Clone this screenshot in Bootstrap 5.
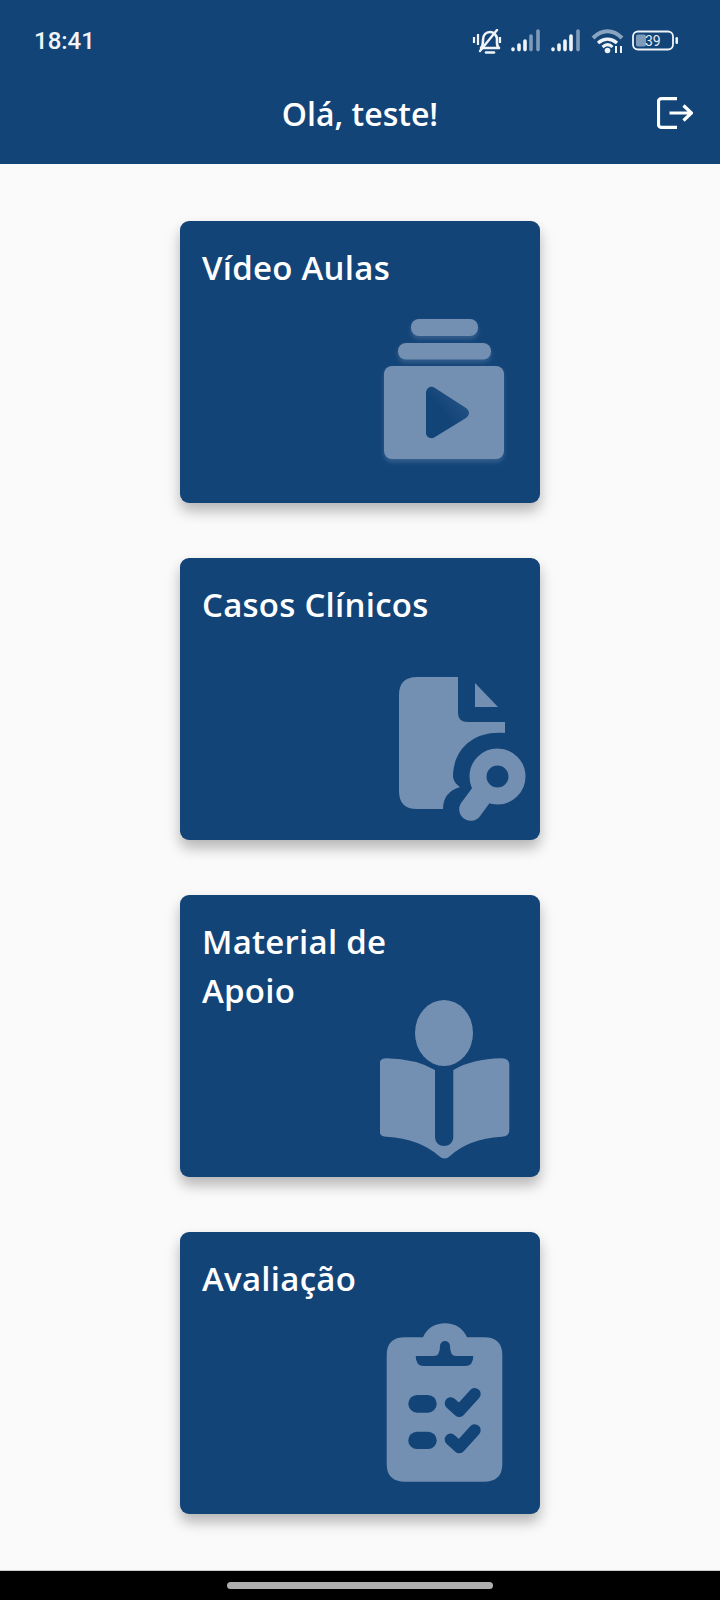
<!DOCTYPE html>
<html lang="pt">
  <head>
    <meta charset="UTF-8" />
    <meta name="viewport" content="width=device-width, initial-scale=1.0"/>
    <title>Olá, teste!</title>
    <link href="https://cdn.jsdelivr.net/npm/bootstrap@5.3.3/dist/css/bootstrap.min.css" rel="stylesheet"/>
    <style>
      body {
        background-color: #fafafa;
        height: 1600px;
        font-family: "Open Sans", Lato, sans-serif;
      }
      .app-top {
        height: 164px;
        background: #134478;
        color: #fff;
      }
      .status-row {
        height: 82px;
        padding: 29px 42px 0 34px;
      }
      .status-time {
        font: 500 24px/24px Roboto, sans-serif;
        color: #f2f5f8;
      }
      .title-row {
        padding: 15px 27px 0;
        height: 82px;
      }
      .title-side { width: 36px; height: 32px; }
      .page-title {
        font-size: 32px;
        font-weight: 600;
        line-height: 34px;
        margin: 0;
      }
      .menu-area {
        padding-top: 57px;
        gap: 55px;
      }
      .menu-tile {
        width: 360px;
        height: 282px;
        padding: 22px;
        background: #134478;
        color: #fff;
        border-radius: 9px;
        box-shadow: 0 8px 14px rgba(0, 0, 0, .28);
      }
      .menu-tile h2 {
        font-size: 33px;
        font-weight: 600;
        letter-spacing: .25px;
        line-height: 49px;
        margin: 0;
        max-width: 250px;
      }
      .tile-icon {
        position: absolute;
        right: 0;
        bottom: 0;
        width: 160px;
        height: 200px;
      }
      .icon-fill { fill: #7390b2; }
      .icon-cut { fill: #134478; }
      .icon-cut-line { fill: none; stroke: #134478; stroke-linecap: round; stroke-linejoin: round; }
      .nav-strip {
        height: 30px;
        background: #000;
        border-top: 1px solid #c8c8c8;
      }
      .nav-handle {
        width: 266px;
        height: 7px;
        margin-top: 11px;
        background: #aeaeae;
        border-radius: 4px;
      }
      .battery-text { font: 400 14px Roboto, sans-serif; fill: #e8edf3; }
    </style>
  </head>
  <body class="d-flex flex-column">
    <header class="app-top">
      <div class="status-row d-flex justify-content-between align-items-start">
        <span class="status-time">18:41</span>
        <svg width="206" height="26" viewBox="472 29 206 26" fill="none">
          <!-- bell with slash -->
          <path d="M481 48c2-2 2-4 2-8 0-5 3-8 7-8s6 3 7 6v5c0 2 .5 4 2 5z" stroke="#f0f3f7" stroke-width="2.600" stroke-linejoin="round"/>
          <path d="M486 52.500h8" stroke="#f0f3f7" stroke-width="2.600" stroke-linecap="round"/>
          <path d="M480 51 497 30" stroke="#f0f3f7" stroke-width="2.400" stroke-linecap="round"/>
          <path d="M474 37v6M478 34v11M500 37v6" stroke="#f0f3f7" stroke-width="2.200"/>
          <!-- signal 1 -->
          <g stroke-width="3.600" stroke-linecap="round">
            <path d="M513 49v.6M519 45v4.600M525 41v8.600" stroke="#f0f3f7"/>
            <path d="M531 36v13.600M538 31v18.600" stroke="#7f9bb9"/>
            <!-- signal 2 -->
            <path d="M553 49v.6M559 45v4.600M565 41v8.600M571 36v13.600" stroke="#f0f3f7"/>
            <path d="M578 31v18.600" stroke="#7f9bb9"/>
          </g>
          <!-- wifi -->
          <path d="M593 38c9-9 20-9 29 0" stroke="#8aa3bf" stroke-width="4"/>
          <path d="M598 43c6-5 13-5 19 0" stroke="#f0f3f7" stroke-width="3.400"/>
          <path d="M602.500 47c3.500-3 7-3 10 0" stroke="#f0f3f7" stroke-width="3"/>
          <circle cx="607.500" cy="50.500" r="2.800" fill="#f0f3f7"/>
          <path d="M616 46v7M621 46v7" stroke="#f0f3f7" stroke-width="2"/>
          <!-- battery -->
          <rect x="633" y="31.500" width="40" height="18" rx="5" stroke="#f0f3f7" stroke-width="1.800"/>
          <rect x="636" y="34.500" width="10" height="12" rx="2" fill="#7f9bb9"/>
          <text x="645" y="46" class="battery-text">39</text>
          <rect x="675.500" y="37" width="2.500" height="7" rx="1.200" fill="#f0f3f7"/>
        </svg>
      </div>
      <div class="title-row d-flex justify-content-between align-items-start">
        <span class="title-side"></span>
        <h1 class="page-title">Olá, teste!</h1>
        <svg class="title-side" viewBox="0 0 36 32" fill="none" stroke="#fff" stroke-width="3.200">
          <path d="M20 1.600H4.500a3 3 0 0 0-3 3v22.800a3 3 0 0 0 3 3H20"/>
          <path d="M12.500 16H34M26.500 8.500 34.500 16l-8 7.500"/>
        </svg>
      </div>
    </header>

    <main class="menu-area flex-grow-1 d-flex flex-column align-items-center">
      <a class="menu-tile position-relative d-block text-decoration-none">
        <h2>Vídeo Aulas</h2>
        <svg class="tile-icon" viewBox="200 82 160 200">
          <defs>
            <filter id="softGlow" x="-10%" y="-10%" width="120%" height="125%">
              <feDropShadow dx="0" dy="3" stdDeviation="2" flood-color="#7390b2" flood-opacity=".35"/>
            </filter>
            <linearGradient id="playFade" x1="0" y1="1" x2="1" y2="0">
              <stop offset=".45" stop-color="#134478"/>
              <stop offset="1" stop-color="#2c5a8c"/>
            </linearGradient>
          </defs>
          <g filter="url(#softGlow)">
            <rect class="icon-fill" x="231" y="98" width="67" height="17" rx="8"/>
            <rect class="icon-fill" x="218" y="122" width="93" height="16.500" rx="8"/>
            <rect class="icon-fill" x="204" y="145" width="120" height="93" rx="8"/>
          </g>
          <path fill="url(#playFade)" d="M246 172c0-5 5-8 9-5l31 20c4 3 4 7 0 10l-31 19c-4 3-9 0-9-4z"/>
        </svg>
      </a>
      <a class="menu-tile position-relative d-block text-decoration-none">
        <h2>Casos Clínicos</h2>
        <svg class="tile-icon" viewBox="200 82 160 200">
          <path class="icon-fill" d="M237 119H278V155Q278 164 288 164H325V175C295 172 273 190 273 219Q274 225 280 229Q263 234 263 251H237Q219 251 219 233V137Q219 119 237 119Z"/>
          <path class="icon-fill" d="M295 125 318 149H295Z"/>
          <circle cx="317.500" cy="218.500" r="19.500" fill="none" stroke="#7390b2" stroke-width="17"/>
          <path d="M302 236 290.700 251.300" fill="none" stroke="#7390b2" stroke-width="23" stroke-linecap="round"/>
        </svg>
      </a>
      <a class="menu-tile position-relative d-block text-decoration-none">
        <h2>Material de Apoio</h2>
        <svg class="tile-icon" viewBox="200 82 160 200">
          <ellipse class="icon-fill" cx="264" cy="138" rx="29" ry="33"/>
          <path class="icon-fill" d="M199.300 170Q199.300 163.300 206.700 163.300Q236 164 255 175V241.700C255 254 273.300 254 273.300 241.700V175Q292 164 321.700 163.300Q329.300 163.300 329.300 170V235Q329.300 241.700 321.700 241.700Q288 244 270 261Q264.500 266 259 261Q240 244 206.700 241.700Q199.300 241.700 199.300 235Z"/>
        </svg>
      </a>
      <a class="menu-tile position-relative d-block text-decoration-none">
        <h2>Avaliação</h2>
        <svg class="tile-icon" viewBox="200 82 160 200">
          <path class="icon-fill" d="M225 105.300H243C247 96 255 91.300 265 91.300S283 96 287 105.300H304Q322.300 105.300 322.300 123V232Q322.300 249.700 304 249.700H225Q206.700 249.700 206.700 232V123Q206.700 105.300 225 105.300Z"/>
          <path class="icon-cut" d="M235.700 124H254Q260 124 260 114A5 5 0 0 1 270 114Q270 124 276 124H293.300Q293.300 134 285 134H244Q235.700 134 235.700 124Z"/>
          <rect class="icon-cut" x="228.300" y="163" width="28.400" height="17.700" rx="8.800"/>
          <rect class="icon-cut" x="228.300" y="199.700" width="28.400" height="17.400" rx="8.700"/>
          <path class="icon-cut-line" stroke-width="12" d="M270.700 171.300 279.300 179 294.700 162"/>
          <path class="icon-cut-line" stroke-width="12" d="M270.700 207.600 279.300 215.300 294.700 198.300"/>
        </svg>
      </a>
    </main>

    <div class="nav-strip d-flex justify-content-center">
      <div class="nav-handle"></div>
    </div>
    <script src="https://cdn.jsdelivr.net/npm/bootstrap@5.3.3/dist/js/bootstrap.bundle.min.js"></script>
  </body>
</html>
